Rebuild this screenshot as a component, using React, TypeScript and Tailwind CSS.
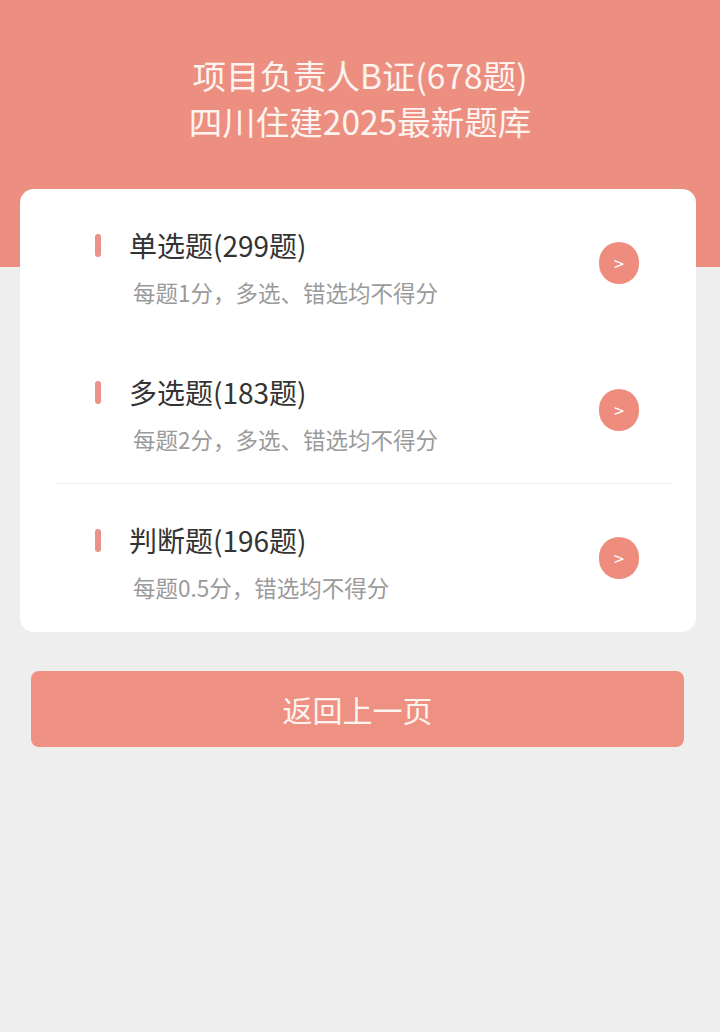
import React from "react";

const rows = [
  { title: "单选题(299题)", sub: "每题1分，多选、错选均不得分" },
  { title: "多选题(183题)", sub: "每题2分，多选、错选均不得分" },
  { title: "判断题(196题)", sub: "每题0.5分，错选均不得分" },
];

function Row({ title, sub }: { title: string; sub: string }) {
  return (
    <div className="flex items-start h-[147px] pt-[40px] pl-[75px] pr-[57px]">
      <div className="flex-1 flex flex-col">
        <div className="flex items-center h-[32px]">
          <div className="w-[6px] h-[23px] rounded-full bg-[#e8928a]" />
          <div className="ml-[28px] text-[28px] leading-[32px] text-[#333333]">{title}</div>
        </div>
        <div className="mt-[16px] ml-[38px] text-[22.5px] leading-[30px] text-[#9a9a9a]">{sub}</div>
      </div>
      <div className="mt-[13px] w-[40px] h-[42px] rounded-full bg-[#ee8c7d] flex items-center justify-center text-white text-[18px] leading-none">
        &gt;
      </div>
    </div>
  );
}

export default function App() {
  return (
    <div
      className="relative w-[720px] min-h-[1032px] bg-[#eeeeee]"
      style={{ fontFamily: '"Noto Sans CJK SC", "Noto Sans", sans-serif' }}
    >
      <div className="absolute left-0 top-0 w-full h-[267px] bg-[#ec8f81]" />
      <div className="relative">
        <div className="pt-[52px] h-[189px] text-center text-[33.5px] leading-[46px] text-[#fdf3ef]">
          <div>项目负责人B证(678题)</div>
          <div>四川住建2025最新题库</div>
        </div>
        <div className="ml-[20px] w-[676px] bg-white rounded-[14px]">
          <Row {...rows[0]} />
          <Row {...rows[1]} />
          <div className="mx-[35px] mr-[24px] h-px bg-[#f0f0f0]" />
          <div className="h-[148px]">
            <Row {...rows[2]} />
          </div>
        </div>
        <div className="mt-[39px] ml-[31px] w-[653px] h-[76px] rounded-[8px] bg-[#ee9183] flex items-center justify-center text-[30px] text-[#fdf3ef]">
          返回上一页
        </div>
      </div>
    </div>
  );
}
